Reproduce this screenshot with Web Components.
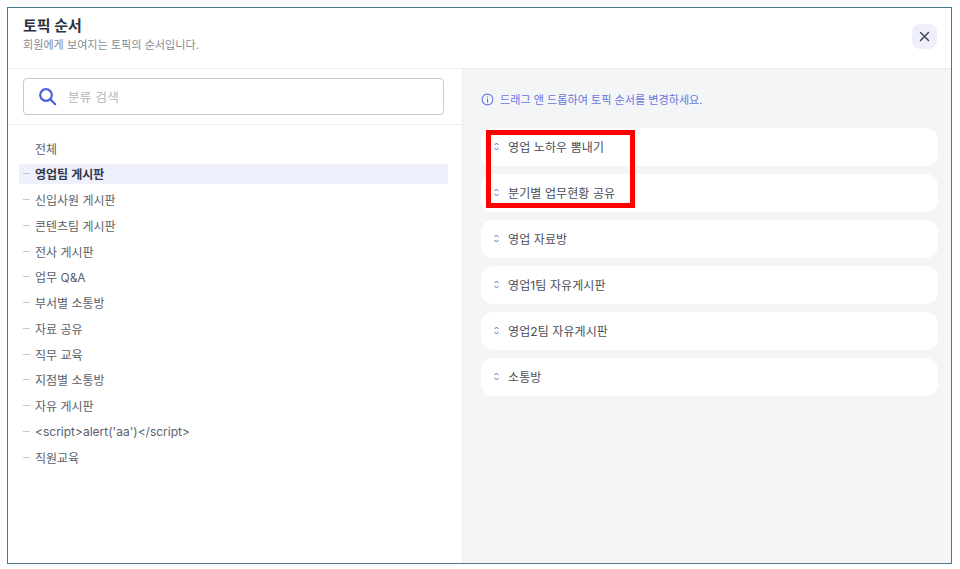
<!doctype html>
<html lang="ko"><head><meta charset="utf-8">
<style>
html,body{margin:0;height:100%;background:#fff}
body{width:960px;height:569px;box-sizing:border-box;padding:7px 8px 4px 7px;font-family:Inter,"Noto Sans CJK KR",sans-serif;overflow:hidden}
</style></head><body>
<topic-dialog>
  <span slot="title">토픽 순서</span>
  <span slot="sub">회원에게 보여지는 토픽의 순서입니다.</span>
  <tree-item slot="tree" plain>전체</tree-item>
  <tree-item slot="tree" active>영업팀 게시판</tree-item>
  <tree-item slot="tree">신입사원 게시판</tree-item>
  <tree-item slot="tree">콘텐츠팀 게시판</tree-item>
  <tree-item slot="tree">전사 게시판</tree-item>
  <tree-item slot="tree">업무 Q&amp;A</tree-item>
  <tree-item slot="tree">부서별 소통방</tree-item>
  <tree-item slot="tree">자료 공유</tree-item>
  <tree-item slot="tree">직무 교육</tree-item>
  <tree-item slot="tree">지점별 소통방</tree-item>
  <tree-item slot="tree">자유 게시판</tree-item>
  <tree-item slot="tree">&lt;script&gt;alert('aa')&lt;/script&gt;</tree-item>
  <tree-item slot="tree">직원교육</tree-item>
  <order-card slot="cards">영업 노하우 뽐내기</order-card>
  <order-card slot="cards">분기별 업무현황 공유</order-card>
  <order-card slot="cards">영업 자료방</order-card>
  <order-card slot="cards">영업1팀 자유게시판</order-card>
  <order-card slot="cards">영업2팀 자유게시판</order-card>
  <order-card slot="cards">소통방</order-card>
</topic-dialog>
<script>
customElements.define('tree-item',class extends HTMLElement{connectedCallback(){
 const s=this.attachShadow({mode:'open'});
 s.innerHTML=`<style>
 :host{display:flex;align-items:center;height:20px;margin-bottom:5.75px;padding-left:4px;font-size:12px;color:#5a5f6b;white-space:nowrap}
 :host([active]){background:#eef0fc;color:#33384a;font-weight:600}
 .d{width:7px;height:1px;background:#c6c8cd;margin-right:5px;flex:none}
 :host([plain]) .d{background:transparent}
 </style><i class="d"></i><slot></slot>`;
}});
customElements.define('order-card',class extends HTMLElement{connectedCallback(){
 const s=this.attachShadow({mode:'open'});
 s.innerHTML=`<style>
 :host{display:flex;align-items:center;height:38px;box-sizing:border-box;padding:0 0 2px 13px;background:#fff;border-radius:12px;font-size:12px;color:#4a4e59;letter-spacing:.1px;white-space:nowrap}
 svg{width:5px;height:9px;margin-right:9px;flex:none}
 </style><svg viewBox="0 0 5 9" fill="none" stroke="#5d67d8" stroke-width="1" stroke-linecap="round" stroke-linejoin="round"><path d="M.8 2.8 2.5 1 4.2 2.8M.8 6.2 2.5 8 4.2 6.2"/></svg><slot></slot>`;
}});
customElements.define('topic-dialog',class extends HTMLElement{connectedCallback(){
 const s=this.attachShadow({mode:'open'});
 s.innerHTML=`<style>
 :host{display:flex;flex-direction:column;position:relative;width:945px;height:557px;box-sizing:border-box;border:1px solid #4f7690;background:#fff}
 header{display:flex;justify-content:space-between;height:61px;box-sizing:border-box;border-bottom:1px solid #eceef0;padding:9px 14px 0 15px;flex:none}
 h1{margin:0;font-size:15px;line-height:18px;font-weight:700;color:#2b3040}
 p{margin:3px 0 0;font-size:11.1px;line-height:15px;color:#868b94}
 button{width:25px;height:25px;margin-top:7px;border:0;border-radius:8px;background:#eeeffb;padding:0;display:flex;align-items:center;justify-content:center}
 .body{flex:1;display:flex;min-height:0}
 .left{width:454px;flex:none;border-right:1px solid #e9ebee;box-sizing:content-box;display:flex;flex-direction:column}
 .sw{height:56px;box-sizing:border-box;padding:9px 18px 0 15px;border-bottom:1px solid #eceef0;flex:none}
 .search{height:37px;box-sizing:border-box;border:1px solid #c6c9ce;border-radius:4px;display:flex;align-items:center;padding-left:14px;font-size:12.5px;color:#b4b7bd;letter-spacing:.3px}
 .search svg{width:19px;height:19px;margin-right:11px}
 .tree{padding:13px 14px 0 11px;display:flex;flex-direction:column}
 .right{flex:1;background:#f3f5f7;padding:22px 13px 0 18px;min-width:0}
 .info{display:flex;align-items:center;height:16px;font-size:11.1px;color:#6a75e0;margin-bottom:21px;white-space:nowrap}
 .info svg{width:13px;height:13px;margin-right:6px;flex:none}
 .cards{display:flex;flex-direction:column;gap:8.1px}
 .mark{position:absolute;left:478px;top:122px;width:149px;height:78px;box-sizing:border-box;border:5px solid #f00;pointer-events:none}
 </style>
 <header><div><h1><slot name="title"></slot></h1><p><slot name="sub"></slot></p></div>
 <button aria-label="닫기"><svg width="11" height="11" viewBox="0 0 11 11" fill="none" stroke="#41465c" stroke-width="1.5" stroke-linecap="round"><path d="M1.5 1.5 9.5 9.5M9.5 1.5 1.5 9.5"/></svg></button></header>
 <div class="body"><div class="left"><div class="sw"><div class="search"><svg viewBox="0 0 19 19" fill="none" stroke="#4f60dc" stroke-width="2.2" stroke-linecap="round"><circle cx="8" cy="8" r="5.8"/><path d="M12.4 12.4 17.2 17.2"/></svg>분류 검색</div></div>
 <div class="tree"><slot name="tree"></slot></div></div>
 <div class="right"><div class="info"><svg viewBox="0 0 13 13" fill="none" stroke="#6a75e0" stroke-width="1.1" stroke-linecap="round"><circle cx="6.5" cy="6.5" r="5.4"/><path d="M6.5 6v3.2M6.5 3.8v.1"/></svg>드래그 앤 드롭하여 토픽 순서를 변경하세요.</div>
 <div class="cards"><slot name="cards"></slot></div></div></div>
 <div class="mark"></div>`;
}});
</script>
</body></html>
